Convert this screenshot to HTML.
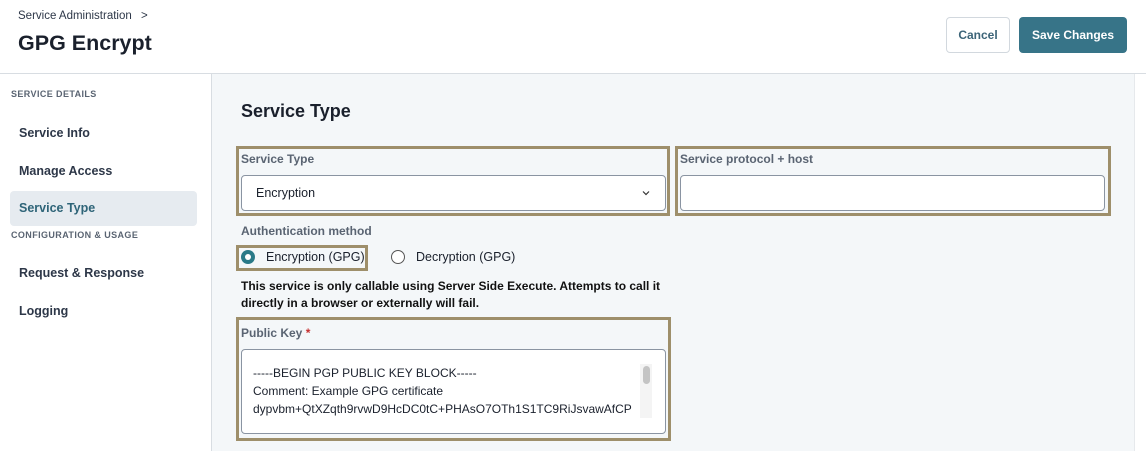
<!DOCTYPE html>
<html><head><style>
*{box-sizing:border-box;margin:0;padding:0}
body{width:1146px;height:451px;overflow:hidden;font-family:"Liberation Sans",sans-serif;background:#fff;position:relative;color:#1a202c}
.a{position:absolute}
.hl{position:absolute;border:3px solid #9e8f6b}
.lbl{font-size:12px;font-weight:bold;color:#5a6472}
.inp{position:absolute;background:#fff;border:1px solid #8a94a2;border-radius:4px}
.nav{position:absolute;left:19px;font-size:12.5px;font-weight:bold;color:#2d3748}
.sec{position:absolute;left:11px;font-size:9px;font-weight:bold;color:#5a6472;letter-spacing:.4px}
</style></head><body>
<div class="a" style="left:18px;top:10px;font-size:11.5px;color:#2d3748">Service Administration <span style="margin-left:6px">&gt;</span></div>
<div class="a" style="left:18px;top:31px;font-size:21.5px;font-weight:bold;color:#1a202c">GPG Encrypt</div>
<div class="a" style="left:946px;top:17px;width:64px;height:36px;border:1px solid #d2d8de;border-radius:4px;font-size:12px;font-weight:bold;color:#3c6478;text-align:center;line-height:34px">Cancel</div>
<div class="a" style="left:1019px;top:17px;width:108px;height:36px;background:#377488;border-radius:4px;font-size:12px;font-weight:bold;color:#fff;text-align:center;line-height:36px">Save Changes</div>
<div class="a" style="left:0;top:73px;width:1146px;height:1px;background:#d8dde2"></div>
<div class="a" style="left:212px;top:74px;width:922px;height:377px;background:#f4f7f9"></div>
<div class="a" style="left:211px;top:74px;width:1px;height:377px;background:#d8dde2"></div>
<div class="a" style="left:1134px;top:74px;width:1px;height:377px;background:#e6e9ec"></div>
<div class="sec" style="top:89px">SERVICE DETAILS</div>
<div class="nav" style="top:126px">Service Info</div>
<div class="nav" style="top:164px">Manage Access</div>
<div class="a" style="left:10px;top:191px;width:187px;height:35px;background:#e6ebf0;border-radius:4px"></div>
<div class="nav" style="top:201px;color:#2e6478">Service Type</div>
<div class="sec" style="top:230px">CONFIGURATION &amp; USAGE</div>
<div class="nav" style="top:266px">Request &amp; Response</div>
<div class="nav" style="top:304px">Logging</div>
<div class="a" style="left:241px;top:101px;font-size:18px;font-weight:bold;color:#1a202c">Service Type</div>
<div class="hl" style="left:236px;top:146px;width:434px;height:70px"></div>
<div class="a lbl" style="left:241px;top:152px">Service Type</div>
<div class="inp" style="left:241px;top:175px;width:425px;height:36px"><span class="a" style="left:14px;top:10px;font-size:12.5px;color:#1a202c">Encryption</span><svg class="a" style="left:400px;top:14px" width="8" height="6" viewBox="0 0 8 6"><path d="M1 1.5L4 4.5L7 1.5" fill="none" stroke="#333" stroke-width="1.2"/></svg></div>
<div class="hl" style="left:675px;top:146px;width:436px;height:70px"></div>
<div class="a lbl" style="left:680px;top:152px">Service protocol + host</div>
<div class="inp" style="left:680px;top:175px;width:425px;height:36px"></div>
<div class="a lbl" style="left:241px;top:224px">Authentication method</div>
<div class="hl" style="left:236px;top:245px;width:132px;height:26px"></div>
<div class="a" style="left:241px;top:250px;width:14px;height:14px;border-radius:50%;background:#2a7a88"><div class="a" style="left:4px;top:4px;width:6px;height:6px;border-radius:50%;background:#fff"></div></div>
<div class="a" style="left:266px;top:250px;font-size:12.5px;color:#1a202c">Encryption (GPG)</div>
<div class="a" style="left:391px;top:250px;width:14px;height:14px;border-radius:50%;border:1px solid #555;background:#fff"></div>
<div class="a" style="left:416px;top:250px;font-size:12.5px;color:#1a202c">Decryption (GPG)</div>
<div class="a" style="left:241px;top:278px;font-size:12px;font-weight:bold;color:#111;line-height:17px">This service is only callable using Server Side Execute. Attempts to call it<br>directly in a browser or externally will fail.</div>
<div class="hl" style="left:236px;top:317px;width:435px;height:124px"></div>
<div class="a lbl" style="left:241px;top:326px">Public Key <span style="color:#c53030">*</span></div>
<div class="inp" style="left:241px;top:349px;width:425px;height:85px">
<div class="a" style="left:11px;top:14px;font-size:12px;color:#1a202c;line-height:18px;white-space:nowrap">-----BEGIN PGP PUBLIC KEY BLOCK-----<br>Comment: Example GPG certificate<br>dypvbm+QtXZqth9rvwD9HcDC0tC+PHAsO7OTh1S1TC9RiJsvawAfCP</div>
<div class="a" style="left:398px;top:14px;width:12px;height:54px;background:#f4f4f4"></div>
<div class="a" style="left:401px;top:16px;width:7px;height:18px;border-radius:4px;background:#c4c4c4"></div>
</div>
</body></html>
